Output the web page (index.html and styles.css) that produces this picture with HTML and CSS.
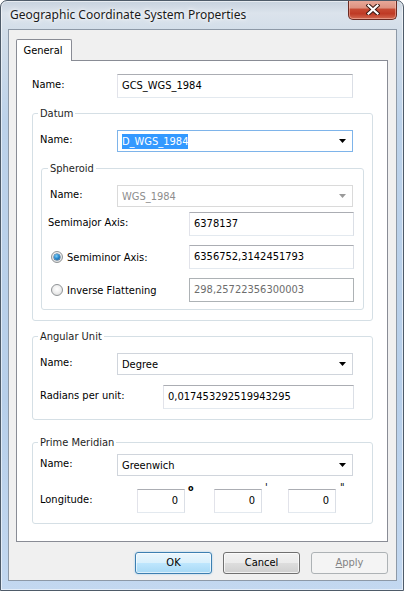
FILE: index.html
```html
<!DOCTYPE html>
<html>
<head>
<meta charset="utf-8">
<title>Geographic Coordinate System Properties</title>
<link rel="stylesheet" href="styles.css">
</head>
<body>
<div class="window">
  <div class="titlebar">
    <span class="title">Geographic Coordinate System Properties</span>
    <div class="close">
      <svg width="14" height="11" viewBox="0 0 14 11">
        <path d="M2.5 1.5 L11.5 9.5 M11.5 1.5 L2.5 9.5" stroke="#3a1a14" stroke-width="4.2" stroke-linecap="square" fill="none"/>
        <path d="M2.5 1.5 L11.5 9.5 M11.5 1.5 L2.5 9.5" stroke="#ffffff" stroke-width="2.2" stroke-linecap="square" fill="none"/>
      </svg>
    </div>
  </div>
  <div class="client">
    <div class="tabs">
      <div class="tab">General</div>
    </div>
    <div class="panel">
      <div class="row">
        <span class="lbl lbl-top">Name:</span>
        <div class="field text w-name">GCS_WGS_1984</div>
      </div>

      <fieldset class="group datum">
        <legend>Datum</legend>
        <div class="row">
          <span class="lbl lbl-g">Name:</span>
          <div class="field combo focus w-name"><span class="val"><span class="sel">D_WGS_1984</span></span><svg class="arrow" width="7" height="4" viewBox="0 0 7 4"><path d="M0 0H7L3.5 4Z" fill="#000"/></svg></div>
        </div>

        <fieldset class="group spheroid">
          <legend>Spheroid</legend>
          <div class="row">
            <span class="lbl lbl-s">Name:</span>
            <div class="field combo disabled w-name"><span class="val">WGS_1984</span><svg class="arrow" width="7" height="4" viewBox="0 0 7 4"><path d="M0 0H7L3.5 4Z" fill="#9a9a9a"/></svg></div>
          </div>
          <div class="row r-major">
            <span class="lbl lbl-major">Semimajor Axis:</span>
            <div class="field text w-axis">6378137</div>
          </div>
          <div class="row r-radio">
            <span class="radio checked"></span>
            <span class="lbl lbl-radio">Semiminor Axis:</span>
            <div class="field text w-axis">6356752,3142451793</div>
          </div>
          <div class="row r-radio">
            <span class="radio"></span>
            <span class="lbl lbl-radio">Inverse Flattening</span>
            <div class="field text dis-text w-axis">298,25722356300003</div>
          </div>
        </fieldset>
      </fieldset>

      <fieldset class="group angular">
        <legend>Angular Unit</legend>
        <div class="row">
          <span class="lbl lbl-g">Name:</span>
          <div class="field combo w-name"><span class="val">Degree</span><svg class="arrow" width="7" height="4" viewBox="0 0 7 4"><path d="M0 0H7L3.5 4Z" fill="#000"/></svg></div>
        </div>
        <div class="row r-rad">
          <span class="lbl lbl-rad">Radians per unit:</span>
          <div class="field text w-rad">0,017453292519943295</div>
        </div>
      </fieldset>

      <fieldset class="group meridian">
        <legend>Prime Meridian</legend>
        <div class="row">
          <span class="lbl lbl-g">Name:</span>
          <div class="field combo w-name"><span class="val">Greenwich</span><svg class="arrow" width="7" height="4" viewBox="0 0 7 4"><path d="M0 0H7L3.5 4Z" fill="#000"/></svg></div>
        </div>
        <div class="row r-lon">
          <span class="lbl lbl-lon">Longitude:</span>
          <div class="field text num">0</div>
          <span class="unit u-deg">o</span>
          <div class="field text num">0</div>
          <span class="unit u-min">'</span>
          <div class="field text num">0</div>
          <span class="unit u-sec">"</span>
        </div>
      </fieldset>
    </div>
    <div class="buttons">
      <div class="btn default">OK</div>
      <div class="btn">Cancel</div>
      <div class="btn disabled"><u>A</u>pply</div>
    </div>
  </div>
</div>
</body>
</html>
```

FILE: styles.css
```css
html, body {
  margin: 0;
  padding: 0;
  background: #ffffff;
}

body {
  font-family: "DejaVu Sans Condensed", "Liberation Sans", sans-serif;
  font-stretch: condensed;
  font-size: 11px;
  color: #000;
}

.window {
  width: 404px;
  height: 591px;
  box-sizing: border-box;
  border: 1px solid #4e5b69;
  border-radius: 7px 7px 0 0;
  padding: 0 6px 9px 7px;
  display: flex;
  flex-direction: column;
  overflow: hidden;
  background: linear-gradient(180deg, #c7d2de 0px, #dbe3ec 12px, #d3dee9 29px, #bcd2ea 120px, #b7cfea 400px, #c3d8f0 591px);
  box-shadow: inset 0 0 0 1px rgba(255, 255, 255, 0.55);
}

.titlebar {
  height: 28px;
  flex: none;
  display: flex;
  justify-content: space-between;
  align-items: flex-start;
}

.title {
  margin-left: 2px;
  margin-top: 6px;
  font-family: "Noto Sans", "Open Sans", sans-serif;
  font-stretch: normal;
  font-size: 12px;
  line-height: 16px;
  color: #1a1a1a;
  text-shadow: 0 0 6px #fff, 0 0 3px #fff;
}

.close {
  width: 49px;
  height: 20px;
  margin-top: -1px;
  box-sizing: border-box;
  border: 1px solid #6a2a22;
  border-top: none;
  border-radius: 0 0 5px 5px;
  background: linear-gradient(180deg, #e9ab9c 0%, #dd917f 42%, #c74a33 48%, #bf3a25 72%, #d36a52 100%);
  box-shadow: inset 0 0 0 1px rgba(255, 210, 200, 0.45);
  display: flex;
  align-items: center;
  justify-content: center;
}

.client {
  flex: 1;
  box-sizing: border-box;
  border: 1px solid #8d99a7;
  background: #f0f0f0;
  padding: 9px 8px 6px 7px;
  display: flex;
  flex-direction: column;
}

.tabs {
  height: 21px;
  display: flex;
  position: relative;
  z-index: 1;
}

.tab {
  width: 56px;
  height: 22px;
  box-sizing: border-box;
  border: 1px solid #898c95;
  border-bottom: none;
  border-radius: 2px 2px 0 0;
  background: #ffffff;
  text-align: center;
  line-height: 21px;
  padding-right: 2px;
}

.panel {
  height: 482px;
  box-sizing: border-box;
  border: 1px solid #898c95;
  background: #ffffff;
  padding: 13px 14px 0 15px;
}

.row {
  display: flex;
  align-items: flex-start;
}

.lbl {
  flex: none;
  line-height: 13px;
  white-space: nowrap;
}

.lbl-top { width: 85px; padding-top: 4px; }
.lbl-g { width: 77px; padding-top: 3px; }
.lbl-s { width: 67px; padding-top: 3px; }
.lbl-major { width: 141px; margin-left: -2px; padding-top: 4px; }
.lbl-radio { width: 122px; align-self: center; }
.lbl-rad { width: 123px; padding-top: 4px; }
.lbl-lon { width: 97px; padding-top: 4px; }

.field {
  flex: none;
  box-sizing: border-box;
  background: #ffffff;
  border: 1px solid;
  border-color: #abadb3 #dbdfe6 #e3e9ef #e2e3ea;
  white-space: nowrap;
  overflow: hidden;
}

.text {
  height: 24px;
  line-height: 22px;
  padding-left: 4px;
}

.combo {
  height: 22px;
  display: flex;
  align-items: center;
  padding: 0 6px 0 4px;
  border-color: #d0d5dc;
}

.combo .val {
  flex: 1;
  line-height: 15px;
}

.combo.focus {
  border-color: #7eb4ea;
}

.combo.disabled {
  border-color: #dadada;
  color: #8d8d8d;
}

.sel {
  background: #3399ff;
  color: #ffffff;
  display: inline-block;
  line-height: 15px;
}

.arrow {
  flex: none;
  display: block;
}

.dis-text {
  border-color: #adb2b5;
  color: #6d6d6d;
}

.w-name { width: 236px; }
.w-axis { width: 165px; }
.w-rad { width: 191px; }

.num {
  width: 48px;
  text-align: right;
  padding: 0 6px 0 0;
}

.unit {
  flex: none;
  line-height: 13px;
  color: #000;
}

.u-deg { width: 29px; margin-top: -7px; padding-left: 3px; box-sizing: border-box; font-size: 9px; font-weight: bold; }
.u-min { width: 26px; margin-top: -8px; padding-left: 3px; box-sizing: border-box; }
.u-sec { margin-top: -8px; padding-left: 4px; }

.group {
  margin: 0;
  border: 1px solid #d5dfe5;
  border-radius: 3px;
  min-width: 0;
}

.group legend {
  padding: 0 2px;
  margin-left: -2px;
  line-height: 13px;
  color: #1e1e1e;
}

.datum {
  margin-top: 9px;
  padding: 10px 8px 10px 7px;
}

.spheroid {
  margin: 10px 0 0 1px;
  padding: 10px 0 7px 8px;
}

.r-major { margin-top: 5px; }
.r-radio { margin-top: 9px; align-items: center; }

.radio {
  flex: none;
  width: 12px;
  height: 12px;
  box-sizing: border-box;
  margin-left: 1px;
  margin-right: 4px;
  border-radius: 50%;
  border: 1px solid #8f9396;
  background: radial-gradient(circle at 50% 40%, #ffffff 0%, #f0f0f0 45%, #d4d4d4 100%);
  position: relative;
}

.radio.checked::after {
  content: "";
  position: absolute;
  left: 2px;
  top: 2px;
  width: 6px;
  height: 6px;
  border-radius: 50%;
  background: radial-gradient(circle at 40% 35%, #7fd0f7 0%, #2a8bd0 45%, #0c4f8a 100%);
  box-shadow: 0 0 0 0.5px #1d4f7a;
}

.angular {
  margin-top: 9px;
  padding: 10px 8px 10px 7px;
}

.r-rad { margin-top: 10px; }

.meridian {
  margin-top: 16px;
  padding: 5px 8px 10px 7px;
}

.r-lon { margin-top: 13px; }

.buttons {
  margin-top: 10px;
  display: flex;
  justify-content: flex-end;
  gap: 11px;
}

.btn {
  width: 77px;
  height: 22px;
  box-sizing: border-box;
  border: 1px solid #707070;
  border-radius: 3px;
  text-align: center;
  line-height: 20px;
  background: linear-gradient(180deg, #f2f2f2 0%, #ebebeb 49%, #dddddd 51%, #cfcfcf 100%);
  box-shadow: inset 0 0 0 1px rgba(255, 255, 255, 0.7);
}

.btn.default {
  border-color: #3c7fb1;
  background: linear-gradient(180deg, #eaf6fd 0%, #d9f0fc 49%, #bee6fd 51%, #a7d9f5 100%);
  box-shadow: inset 0 0 0 1px rgba(255, 255, 255, 0.6), 0 0 2px rgba(90, 170, 230, 0.6);
}

.btn.disabled {
  border-color: #adb2b5;
  background: #f4f4f4;
  color: #838383;
  box-shadow: none;
}

.btn u {
  text-decoration: underline;
  text-underline-offset: 1px;
}
```
